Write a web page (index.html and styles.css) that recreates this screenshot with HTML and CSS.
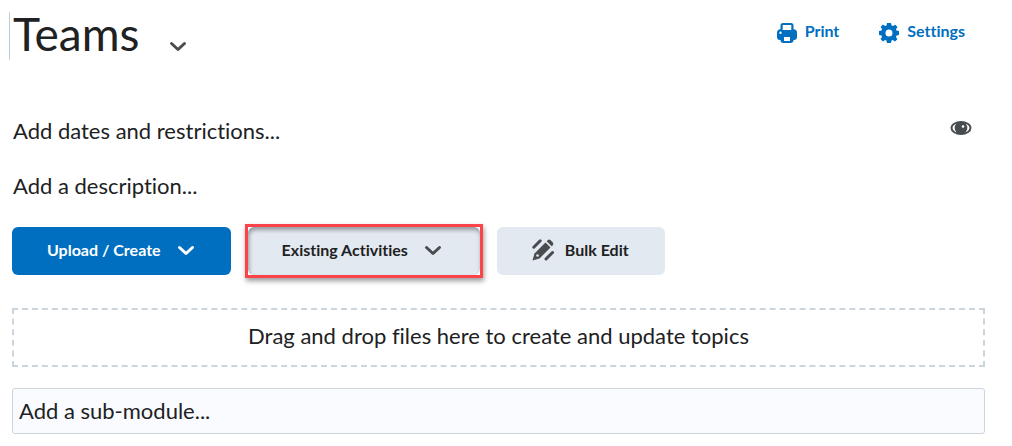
FILE: index.html
```html
<!DOCTYPE html>
<html lang="en">
<head>
    <meta charset="UTF-8">
    <meta name="viewport" content="width=device-width, initial-scale=1.0">
    <title>Teams</title>
    <link rel="stylesheet" href="styles.css">
</head>
<body>
    <main class="module">
        <header class="module-header">
            <div class="title-row">
                <h1 class="module-title">Teams</h1>
                <button class="title-menu" type="button" aria-label="Module actions">
                    <svg class="chevron" viewBox="0 0 18 18"><path d="M2.500 6.500L9 12.500L15.500 6.500"/></svg>
                </button>
            </div>
            <nav class="module-links">
                <a class="module-link" href="#print">
                    <svg class="link-icon" viewBox="0 0 20 20">
                        <path fill-rule="evenodd" d="M6 0h8a2.500 2.500 0 0 1 2.500 2.500V6.300A3.500 3.500 0 0 1 20 9.800V14a3 3 0 0 1-3 3h-.5a3 3 0 0 1-3 3h-7a3 3 0 0 1-3-3H3a3 3 0 0 1-3-3V9.800a3.500 3.500 0 0 1 3.500-3.500V2.500A2.500 2.500 0 0 1 6 0zM5.700 2v5h8.600V2zM7 14v4h6v-4zM3.500 8.500a1.200 1.200 0 1 0 0 2.400a1.200 1.200 0 1 0 0-2.400z"/>
                    </svg>
                    Print
                </a>
                <a class="module-link" href="#settings">
                    <svg class="link-icon" viewBox="0 0 20 20">
                        <path fill-rule="evenodd" d="M8 0h4l.6 2.600l1.300.5L16.200 1.700L18.500 4L17 6.200l.5 1.300L20 8v4l-2.500.6l-.5 1.300l1.400 2.300l-2.400 2.300l-2.200-1.500l-1.300.5L12 20H8l-.6-2.500l-1.300-.5l-2.200 1.500l-2.400-2.400L3 13.900l-.5-1.300L0 12V8l2.500-.6L3 6.100L1.600 3.900L3.900 1.600l2.300 1.500l1.300-.5zM10 6.500a3.500 3.500 0 1 0 0 7a3.500 3.500 0 1 0 0-7z"/>
                    </svg>
                    Settings
                </a>
            </nav>
        </header>

        <div class="detail-row">
            <button class="text-button" type="button">Add dates and restrictions...</button>
            <button class="visibility" type="button" aria-label="Visibility">
                <svg class="eye-icon" viewBox="0 0 22 16">
                    <ellipse class="eye-outline" cx="11" cy="8" rx="9.500" ry="6"/>
                    <circle cx="11" cy="8" r="6.300"/>
                    <circle class="eye-glint" cx="13" cy="6.500" r="1.300"/>
                </svg>
            </button>
        </div>
        <div class="detail-row">
            <button class="text-button" type="button">Add a description...</button>
        </div>

        <div class="actions">
            <button class="button button-primary" type="button">
                Upload / Create
                <svg class="chevron" viewBox="0 0 18 18"><path d="M2.500 6.500L9 12.500L15.500 6.500"/></svg>
            </button>
            <div class="highlight">
                <button class="button button-existing" type="button">
                    Existing Activities
                    <svg class="chevron" viewBox="0 0 18 18"><path d="M2.500 6.500L9 12.500L15.500 6.500"/></svg>
                </button>
            </div>
            <button class="button button-bulk" type="button">
                <svg class="bulk-icon" viewBox="0 0 22 22">
                    <path d="M0.500 21.500L2.500 14.500L13.500 3.500L18.500 8.500L7.500 19.500z"/>
                    <path d="M14.700 2.300L15.800 1.200Q17.200 0 18.600 1.200L20.800 3.400Q22 4.800 20.800 6.200L19.700 7.300z"/>
                    <path class="bulk-line" d="M1.800 8.200L8.200 1.800M14 20L20.500 13.500"/>
                    <circle class="bulk-dot" cx="5.500" cy="16.500" r="1.300"/>
                </svg>
                Bulk Edit
            </button>
        </div>

        <div class="dropzone">Drag and drop files here to create and update topics</div>

        <input class="submodule" type="text" placeholder="Add a sub-module..." aria-label="Add a sub-module">
    </main>
</body>
</html>
```
FILE: styles.css
```css
* {
    box-sizing: border-box;
}

body {
    margin: 0;
    background: #fff;
    color: #202122;
    font-family: Lato, sans-serif;
    font-size: 22px;
    font-variant-ligatures: none;
    line-height: 32px;
}

button,
input {
    margin: 0;
    font: inherit;
    font-variant-ligatures: none;
    color: inherit;
}

button {
    padding: 0;
    border: 0;
    background: none;
    cursor: pointer;
}

svg {
    display: block;
    flex: none;
    fill: currentColor;
}

.module {
    padding: 12px 27px 12px 12px;
}

/* Header */
.module-header {
    display: flex;
    justify-content: space-between;
    align-items: flex-start;
    margin: 0 20px 55px -3px;
}

.title-row {
    display: flex;
    align-items: flex-end;
    gap: 30px;
}

.module-title {
    margin: 0;
    padding: 0 0 4px 3px;
    border-left: 1px solid #b5cfdf;
    font-size: 46px;
    font-weight: 400;
    line-height: 44px;
}

.title-menu {
    padding-bottom: 5px;
    color: #494c4e;
}

.chevron {
    width: 18px;
    height: 18px;
    fill: none;
    stroke: currentColor;
    stroke-width: 3;
    stroke-linecap: round;
    stroke-linejoin: round;
}

.module-links {
    display: flex;
    gap: 40px;
    padding-top: 7px;
}

.module-link {
    display: flex;
    align-items: flex-end;
    gap: 8px;
    color: #006fbf;
    font-size: 16px;
    font-weight: 700;
    line-height: 24px;
    text-decoration: none;
}

.link-icon {
    width: 20px;
    height: 20px;
}

/* Dates and description */
.detail-row {
    display: flex;
    justify-content: space-between;
    align-items: center;
    margin-bottom: 23px;
    padding: 0 13px 0 1px;
}

.visibility {
    padding-bottom: 6px;
}

.eye-icon {
    width: 22px;
    height: 16px;
    color: #494c4e;
}

.eye-outline {
    fill: none;
    stroke: currentColor;
    stroke-width: 2;
}

.eye-glint {
    fill: #fff;
}

/* Buttons */
.actions {
    display: flex;
    align-items: center;
    gap: 14px;
    margin: -1px 0 30px;
}

.button {
    display: flex;
    align-items: center;
    justify-content: center;
    gap: 16px;
    height: 48px;
    padding: 0 36px 2px 35px;
    border-radius: 6px;
    background: #e3e9f1;
    font-size: 16px;
    font-weight: 700;
    line-height: 24px;
    white-space: nowrap;
}

.button .chevron {
    color: #494c4e;
}

.button-primary {
    background: #006fbf;
    color: #fff;
}

.button-primary .chevron {
    color: #fff;
}

.highlight {
    border: 3px solid #fc4349;
    box-shadow: 1px 3px 5px rgba(0, 0, 0, 0.4);
}

.button-existing {
    padding: 0 38px 2px 34px;
    box-shadow: inset 1px 3px 4px rgba(0, 0, 0, 0.35);
}

.button-bulk {
    gap: 11px;
}

.bulk-icon {
    width: 22px;
    height: 22px;
    color: #494c4e;
}

.bulk-line {
    fill: none;
    stroke: currentColor;
    stroke-width: 3;
    stroke-linecap: round;
}

.bulk-dot {
    fill: #e3e9f1;
}

/* Drop area and new sub-module */
.dropzone {
    margin-bottom: 21px;
    padding: 10px 12px 13px;
    border: 2px dashed #cdd5dc;
    text-align: center;
}

.submodule {
    display: block;
    width: 100%;
    height: 46px;
    padding: 0 6px 2px;
    border: 1px solid #cdd5dc;
    border-radius: 3px;
    background: #f9fbff;
}

.submodule::placeholder {
    color: #202122;
    opacity: 1;
}
```
